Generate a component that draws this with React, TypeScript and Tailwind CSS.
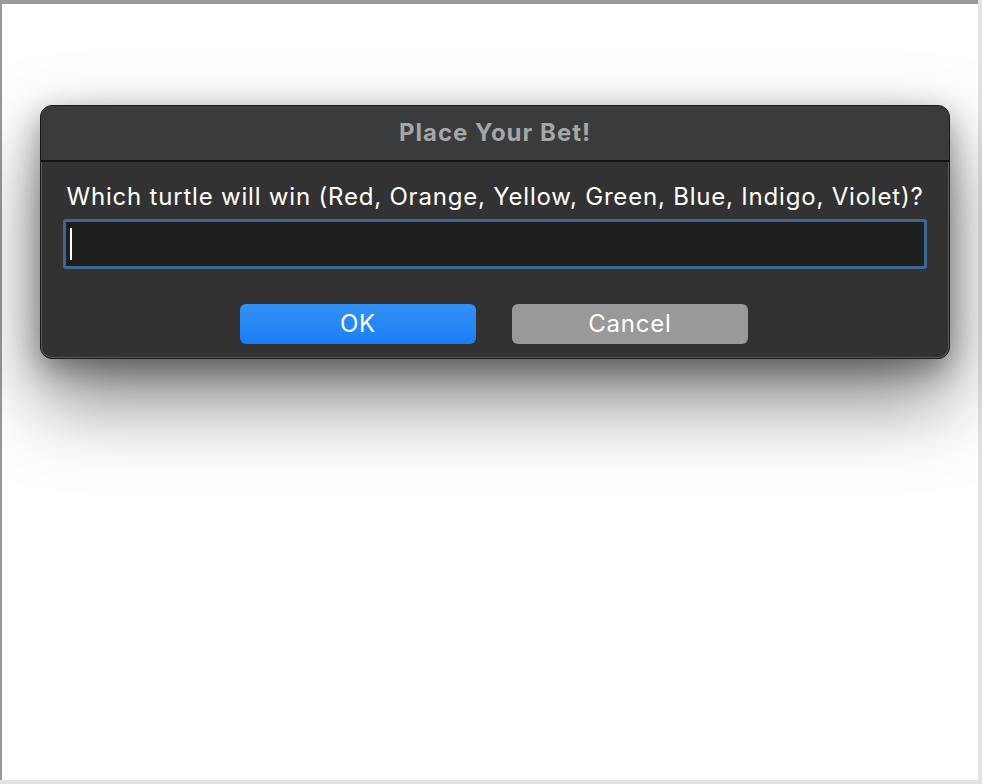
export default function App() {
  return (
    <div className="h-[784px] w-[982px] overflow-hidden bg-[#e3e3e3] font-['Inter',sans-serif]">
      <div className="flex h-[780px] w-[978px] flex-col border-l-2 border-t-4 border-[#9a9a9a] bg-white">
        <div className="ml-[38px] mt-[101px] w-[910px] overflow-hidden rounded-[12px] border border-[#1a1a1a] bg-[#323232] shadow-[0_40px_80px_rgba(0,0,0,0.5),0_10px_30px_rgba(0,0,0,0.35),inset_0_0_0_1px_#5a5a5a]">
          <div className="flex h-[56px] items-center justify-center border-b-2 border-[#141414] bg-[#393b3d]">
            <span className="text-[24px] font-bold tracking-[1px] text-[#a6a6a6]">Place Your Bet!</span>
          </div>
          <div className="flex flex-col px-[22px] pt-[21px] pb-[14px]">
            <p className="text-center text-[24px] leading-[28px] tracking-[0.8px] text-white">
              Which turtle will win (Red, Orange, Yellow, Green, Blue, Indigo, Violet)?
            </p>
            <div className="mt-[8px] flex h-[50px] items-center rounded-[3px] border-[3px] border-[#3d6894] bg-[#1f1f1f] px-[4px]">
              <div className="h-[32px] w-[2px] bg-white" />
            </div>
            <div className="mt-[35px] flex justify-center gap-[36px] pr-[2px]">
              <button className="h-[40px] w-[236px] rounded-[6px] bg-gradient-to-b from-[#3391f6] to-[#197ef5] text-[24px] tracking-[0.8px] text-white">
                OK
              </button>
              <button className="h-[40px] w-[236px] rounded-[6px] bg-[#999999] text-[24px] tracking-[0.8px] text-white">
                Cancel
              </button>
            </div>
          </div>
        </div>
      </div>
    </div>
  );
}
